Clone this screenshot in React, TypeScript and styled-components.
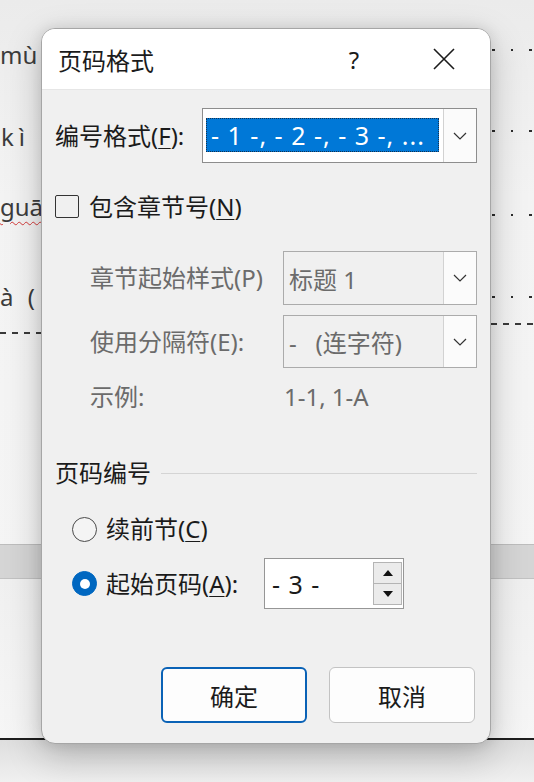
import React from 'react';
import styled, { createGlobalStyle } from 'styled-components';

const GlobalStyle = createGlobalStyle`
  *, *::before, *::after { box-sizing: border-box; }
  html, body { margin: 0; padding: 0; }
  body {
    width: 534px;
    height: 782px;
    overflow: hidden;
    font-family: "Noto Sans", "Noto Sans CJK SC", sans-serif;
  }
`;

// ---- document behind the dialog ----

const Page = styled.div`
  position: relative;
  width: 534px;
  height: 782px;
  overflow: hidden;
  display: flex;
  flex-direction: column;
  background: linear-gradient(180deg, #ebebeb 0%, #f3f3f3 25%, #f6f6f6 100%);
`;

const Margins = styled.div`
  height: 544px;
  display: flex;
  justify-content: space-between;
`;

const LeftMargin = styled.div`
  width: 48px;
  display: flex;
  flex-direction: column;
`;

const RightMargin = styled.div`
  width: 43px;
  display: flex;
  flex-direction: column;
`;

const Pinyin = styled.div<{ $top: number; $shift?: number; $spacing?: number }>`
  margin-top: ${p => p.$top}px;
  margin-left: ${p => p.$shift ?? 0}px;
  height: 30px;
  line-height: 30px;
  font-family: "Noto Sans", "DejaVu Sans", sans-serif;
  font-size: 24px;
  letter-spacing: ${p => p.$spacing ?? 0}px;
  color: #3c3c3c;
  white-space: nowrap;
`;

const Misspelt = styled.span`
  text-decoration: underline wavy #d23a3a;
  text-decoration-thickness: 1px;
  text-underline-offset: 5px;
`;

const Dashes = styled.div<{ $top: number }>`
  margin-top: ${p => p.$top}px;
  flex: none;
  height: 2px;
  width: 100%;
  background: repeating-linear-gradient(90deg, #3a3a3a 0 6px, transparent 6px 12px);
`;

const DotRow = styled.div<{ $top: number }>`
  margin-top: ${p => p.$top}px;
  height: 4px;
  flex: none;
  display: flex;
  align-items: center;
  gap: 16px;
  padding-left: 1px;
`;

const Dot = styled.span`
  width: 2.5px;
  height: 2.5px;
  background: #2c2c2c;
`;

const GrayBand = styled.div`
  height: 35px;
  flex: none;
  background: #d5d5d5;
  border-top: 1px solid #bdbdbd;
  border-bottom: 1px solid #c2c2c2;
`;

const Spacer = styled.div`
  height: 159px;
  flex: none;
  background: linear-gradient(180deg, #f0f0f0, #f6f6f6);
`;

const Footer = styled.div`
  flex: 1;
  border-top: 2px solid #1e1e1e;
  background: linear-gradient(180deg, #dedede, #f0f0f0);
`;

// ---- dialog ----

const Dialog = styled.div`
  position: absolute;
  left: 41px;
  top: 28px;
  width: 450px;
  height: 716px;
  display: flex;
  flex-direction: column;
  border: 1px solid #a6a6a6;
  border-radius: 14px;
  overflow: hidden;
  background: #f0f0f0;
  box-shadow: 0 12px 36px rgba(0, 0, 0, 0.22), 0 0 14px rgba(0, 0, 0, 0.1);
  font-family: "Noto Sans", "Noto Sans CJK SC", sans-serif;
  color: #1b1b1b;
`;

const TitleBar = styled.div`
  height: 61px;
  flex: none;
  display: flex;
  align-items: center;
  padding: 0 23px 0 16px;
  background: #fff;
  border-bottom: 1px solid #e6e6e6;
`;

const Title = styled.div`
  flex: 1;
  font-size: 24px;
`;

const HelpButton = styled.div`
  width: 40px;
  margin-right: 47px;
  text-align: center;
  font-size: 24px;
`;

const CloseButton = styled.div`
  width: 46px;
  display: flex;
  justify-content: center;
`;

const Body = styled.div`
  flex: 1;
  display: flex;
  flex-direction: column;
  padding: 18px 13px 20px 13px;
`;

const Row = styled.div<{ $height: number; $top?: number; $indent?: number }>`
  display: flex;
  align-items: center;
  height: ${p => p.$height}px;
  margin-top: ${p => p.$top ?? 0}px;
  padding-left: ${p => p.$indent ?? 0}px;
  flex: none;
`;

const Label = styled.span<{ $width?: number; $disabled?: boolean; $gap?: number }>`
  flex: none;
  width: ${p => (p.$width ? `${p.$width}px` : 'auto')};
  margin-left: ${p => p.$gap ?? 0}px;
  font-size: 24px;
  line-height: 30px;
  color: ${p => (p.$disabled ? '#6b6b6b' : '#1b1b1b')};
  white-space: nowrap;

  u {
    text-underline-offset: 3px;
    text-decoration-thickness: 1px;
  }
`;

const Select = styled.div<{ $disabled?: boolean }>`
  flex: 1;
  align-self: stretch;
  display: flex;
  border: 1px solid ${p => (p.$disabled ? '#ababab' : '#8d8d8d')};
  background: ${p => (p.$disabled ? '#f0f0f0' : '#fff')};
`;

const SelectValue = styled.div<{ $disabled?: boolean }>`
  flex: 1;
  display: flex;
  align-items: center;
  padding-left: 5px;
  font-size: 24px;
  color: ${p => (p.$disabled ? '#6b6b6b' : '#1b1b1b')};
  white-space: nowrap;
`;

const Highlight = styled.div`
  flex: 1;
  align-self: stretch;
  margin: 9px 4px 10px -2px;
  display: flex;
  align-items: center;
  padding-left: 4px;
  background: #0078d7;
  border: 1px dotted #15314f;
  color: #fff;
  font-size: 25px;
  letter-spacing: 1px;
  white-space: nowrap;
  overflow: hidden;
`;

const SelectArrow = styled.div`
  width: 33px;
  flex: none;
  display: flex;
  align-items: center;
  justify-content: center;
  border-left: 1px solid #d2d2d2;
  background: #fbfbfb;
`;

const CheckBox = styled.span`
  width: 24px;
  height: 23px;
  flex: none;
  border: 1px solid #333;
  border-radius: 2px;
`;

const SectionRule = styled.span`
  flex: 1;
  height: 1px;
  margin-left: 10px;
  background: #d4d4d4;
`;

const Radio = styled.span<{ $checked?: boolean }>`
  width: 25px;
  height: 25px;
  flex: none;
  border-radius: 50%;
  display: flex;
  align-items: center;
  justify-content: center;
  border: 1px solid ${p => (p.$checked ? '#0067c0' : '#4a4a4a')};
  background: ${p => (p.$checked ? '#0067c0' : '#f4f4f4')};

  &::after {
    content: '';
    display: ${p => (p.$checked ? 'block' : 'none')};
    width: 10px;
    height: 10px;
    border-radius: 50%;
    background: #fff;
  }
`;

const SpinBox = styled.div`
  width: 140px;
  height: 51px;
  display: flex;
  border: 1px solid #969696;
  background: #fff;
`;

const SpinValue = styled.div`
  flex: 1;
  display: flex;
  align-items: center;
  padding-left: 7px;
  font-size: 25px;
  letter-spacing: 1px;
`;

const SpinButtons = styled.div`
  width: 29px;
  margin: 3px 1px 3px 0;
  display: flex;
  flex-direction: column;
`;

const SpinButton = styled.div`
  flex: 1;
  display: flex;
  align-items: center;
  justify-content: center;
  border: 1px solid #b4b4b4;
  background: #ebebeb;

  & + & {
    border-top: none;
  }
`;

const ButtonRow = styled.div`
  margin-top: 58px;
  display: flex;
  justify-content: flex-end;
  gap: 22px;
  padding-right: 2px;
`;

const Button = styled.button<{ $primary?: boolean }>`
  width: 146px;
  height: 56px;
  border-radius: 6px;
  border: ${p => (p.$primary ? '2px solid #0a62b6' : '1px solid #c3c3c3')};
  background: #fdfdfd;
  font-family: "Noto Sans", "Noto Sans CJK SC", sans-serif;
  font-size: 24px;
  color: #1b1b1b;
  padding: 0;
`;

const Chevron = () => (
  <svg width="14" height="8" viewBox="0 0 14 8">
    <path d="M1 1 L7 7 L13 1" fill="none" stroke="#333" strokeWidth="1.2" />
  </svg>
);

const Triangle = ({ up }: { up?: boolean }) => (
  <svg width="10" height="6" viewBox="0 0 10 6">
    <path d={up ? 'M0 6 L5 0 L10 6 Z' : 'M0 0 L5 6 L10 0 Z'} fill="#111" />
  </svg>
);

const CloseIcon = () => (
  <svg width="22" height="22" viewBox="0 0 22 22">
    <path d="M1 1 L21 21 M21 1 L1 21" stroke="#1b1b1b" strokeWidth="1.6" />
  </svg>
);

const dotRows = [48, 77, 80, 78];

const App: React.FC = () => (
  <Page>
    <GlobalStyle />
    <Margins>
      <LeftMargin>
        <Pinyin $top={40}>mù</Pinyin>
        <Pinyin $top={52} $shift={1} $spacing={5}>kì</Pinyin>
        <Pinyin $top={40}><Misspelt>guā</Misspelt></Pinyin>
        <Pinyin $top={60} $spacing={4}>à (</Pinyin>
        <Dashes $top={20} />
      </LeftMargin>
      <RightMargin>
        {dotRows.map((top, i) => (
          <DotRow key={i} $top={top}>
            <Dot />
            <Dot />
            <Dot />
          </DotRow>
        ))}
        <Dashes $top={24} />
      </RightMargin>
    </Margins>
    <GrayBand />
    <Spacer />
    <Footer />

    <Dialog>
      <TitleBar>
        <Title>页码格式</Title>
        <HelpButton>?</HelpButton>
        <CloseButton>
          <CloseIcon />
        </CloseButton>
      </TitleBar>
      <Body>
        <Row $height={55}>
          <Label $width={147}>编号格式(<u>F</u>):</Label>
          <Select>
            <SelectValue>
              <Highlight>- 1 -, - 2 -, - 3 -, ...</Highlight>
            </SelectValue>
            <SelectArrow>
              <Chevron />
            </SelectArrow>
          </Select>
        </Row>

        <Row $height={23} $top={32}>
          <CheckBox />
          <Label $gap={10}>包含章节号(<u>N</u>)</Label>
        </Row>

        <Row $height={54} $top={33} $indent={35}>
          <Label $width={193} $disabled>章节起始样式(P)</Label>
          <Select $disabled>
            <SelectValue $disabled>标题 1</SelectValue>
            <SelectArrow>
              <Chevron />
            </SelectArrow>
          </Select>
        </Row>

        <Row $height={53} $top={10} $indent={35}>
          <Label $width={193} $disabled>使用分隔符(E):</Label>
          <Select $disabled>
            <SelectValue $disabled>-&nbsp;&nbsp;&nbsp;(连字符)</SelectValue>
            <SelectArrow>
              <Chevron />
            </SelectArrow>
          </Select>
        </Row>

        <Row $height={24} $top={17} $indent={35}>
          <Label $width={194} $disabled>示例:</Label>
          <Label $disabled>1-1, 1-A</Label>
        </Row>

        <Row $height={28} $top={50}>
          <Label>页码编号</Label>
          <SectionRule />
        </Row>

        <Row $height={28} $top={28} $indent={17}>
          <Radio />
          <Label $gap={9}>续前节(<u>C</u>)</Label>
        </Row>

        <Row $height={51} $top={15} $indent={17}>
          <Radio $checked />
          <Label $gap={9} $width={158}>起始页码(<u>A</u>):</Label>
          <SpinBox>
            <SpinValue>- 3 -</SpinValue>
            <SpinButtons>
              <SpinButton>
                <Triangle up />
              </SpinButton>
              <SpinButton>
                <Triangle />
              </SpinButton>
            </SpinButtons>
          </SpinBox>
        </Row>

        <ButtonRow>
          <Button $primary>确定</Button>
          <Button>取消</Button>
        </ButtonRow>
      </Body>
    </Dialog>
  </Page>
);

export default App;
